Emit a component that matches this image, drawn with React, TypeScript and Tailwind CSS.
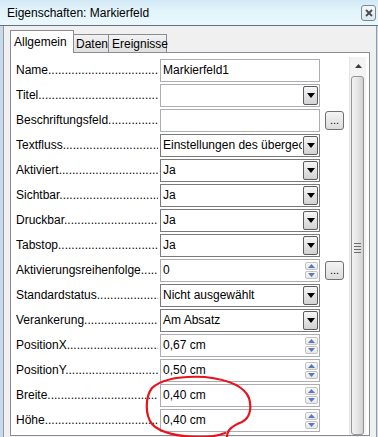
import React from 'react'

type Kind = 'text' | 'combo' | 'list' | 'spin'

type Row = { label: string; kind: Kind; value: string; more?: boolean }

const rows: Row[] = [
  { label: 'Name', kind: 'text', value: 'Markierfeld1' },
  { label: 'Titel', kind: 'combo', value: '' },
  { label: 'Beschriftungsfeld', kind: 'text', value: '', more: true },
  { label: 'Textfluss', kind: 'list', value: 'Einstellungen des übergeordneten Objekts' },
  { label: 'Aktiviert', kind: 'list', value: 'Ja' },
  { label: 'Sichtbar', kind: 'list', value: 'Ja' },
  { label: 'Druckbar', kind: 'list', value: 'Ja' },
  { label: 'Tabstop', kind: 'list', value: 'Ja' },
  { label: 'Aktivierungsreihenfolge', kind: 'spin', value: '0', more: true },
  { label: 'Standardstatus', kind: 'list', value: 'Nicht ausgewählt' },
  { label: 'Verankerung', kind: 'list', value: 'Am Absatz' },
  { label: 'PositionX', kind: 'spin', value: '0,67 cm' },
  { label: 'PositionY', kind: 'spin', value: '0,50 cm' },
  { label: 'Breite', kind: 'spin', value: '0,40 cm' },
  { label: 'Höhe', kind: 'spin', value: '0,40 cm' },
]

function DropButton() {
  return (
    <div className="m-px flex w-[15px] items-center justify-center rounded-[2px] border border-[#5c5c5c] bg-gradient-to-b from-[#f6f6f6] to-[#d2d2d2]">
      <svg width="8" height="5" viewBox="0 0 8 5">
        <path d="M0 0h8L4 5z" fill="#000" />
      </svg>
    </div>
  )
}

function SpinButtons() {
  return (
    <div className="flex w-[14px] flex-col gap-px py-[2px] pr-px">
      <div className="flex h-[9px] items-center justify-center rounded-[2px] border border-[#c2c2c2] bg-gradient-to-b from-[#fafafa] to-[#e6e6e6]">
        <svg width="7" height="4" viewBox="0 0 7 4">
          <path d="M3.5 0L7 4H0z" fill="#5a78bd" />
        </svg>
      </div>
      <div className="flex h-[9px] items-center justify-center rounded-[2px] border border-[#c2c2c2] bg-gradient-to-b from-[#fafafa] to-[#e6e6e6]">
        <svg width="7" height="4" viewBox="0 0 7 4">
          <path d="M0 0h7L3.5 4z" fill="#5a78bd" />
        </svg>
      </div>
    </div>
  )
}

function Field({ row }: { row: Row }) {
  const dark = row.kind === 'list'
  return (
    <div
      className={
        'flex h-[23px] w-[160px] bg-white ' +
        (dark ? 'border border-[#7a7a7a]' : 'border border-[#acadb3]')
      }
    >
      <div className="flex-1 overflow-hidden whitespace-nowrap pl-[2px] text-[12px] leading-[21px] text-black">
        {row.value}
      </div>
      {(row.kind === 'list' || row.kind === 'combo') && <DropButton />}
      {row.kind === 'spin' && <SpinButtons />}
    </div>
  )
}

export default function App() {
  return (
    <div className="relative flex h-[437px] w-[378px] flex-col overflow-hidden bg-[#f0f0f0] font-['Liberation_Sans',Arial,sans-serif] text-black">
      {/* title bar */}
      <div className="flex h-[26px] items-center justify-between border-b border-[#65727e] bg-[linear-gradient(180deg,#d2e9f5_0%,#e2f3fb_40%,#eaf8fd_100%)] pl-[7px] pr-[2px]">
        <span className="text-[12px] leading-none">Eigenschaften: Markierfeld</span>
        <div className="flex h-[16px] w-[15px] items-center justify-center rounded-[3px] border border-[#7b8895] bg-gradient-to-b from-[#f4f9fc] to-[#dbe8f0]">
          <svg width="8" height="8" viewBox="0 0 8 8">
            <path d="M1 1l6 6M7 1l-6 6" stroke="#4a4a4a" strokeWidth="1.8" />
          </svg>
        </div>
      </div>

      <div className="flex flex-1">
        <div className="w-[4px] border-r border-[#8e9baa] bg-[#c8dae8]" />
        <div className="flex flex-1 flex-col pl-[6px] pr-[6px] pt-[4px]">
          {/* tabs */}
          <div className="relative z-10 -mb-px flex items-end">
            <div className="flex h-[23px] w-[64px] items-center border border-b-0 border-[#898c95] bg-white pl-[3px] text-[12px]">
              Allgemein
            </div>
            <div className="flex h-[19px] w-[35px] items-center border border-l-0 border-[#898c95] bg-gradient-to-b from-[#f2f2f2] to-[#e0e0e0] pl-[2px] text-[12px]">
              Daten
            </div>
            <div className="flex h-[19px] w-[58px] items-center border border-l-0 border-[#898c95] bg-gradient-to-b from-[#f2f2f2] to-[#e0e0e0] pl-[3px] text-[12px]">
              Ereignisse
            </div>
          </div>

          {/* panel */}
          <div className="flex h-[384px] w-[360px] border border-[#898c95] bg-white">
            <div className="flex w-[338px] flex-col gap-[2px] pl-[5px] pt-[6px]">
              {rows.map((row) => (
                <div key={row.label} className="flex h-[23px] items-center">
                  <div className="mr-[2px] w-[142px] overflow-hidden whitespace-nowrap text-[12px] leading-[23px]">
                    {row.label}
                    {'.'.repeat(60)}
                  </div>
                  <Field row={row} />
                  {row.more && (
                    <div className="ml-[5px] flex h-[19px] w-[19px] items-end justify-center rounded-[3px] border border-[#707070] bg-gradient-to-b from-[#f4f4f4] to-[#dcdcdc] pb-[3px] text-[11px] leading-none">
                      ...
                    </div>
                  )}
                </div>
              ))}
            </div>

            {/* scrollbar */}
            <div className="mt-[4px] flex w-[17px] flex-col border-l border-[#e4e4e4] bg-[#f3f3f3]">
              <div className="flex h-[17px] items-center justify-center">
                <svg width="7" height="4" viewBox="0 0 7 4">
                  <path d="M3.5 0L7 4H0z" fill="#3c3c3c" />
                </svg>
              </div>
              <div className="ml-px mr-[2px] mt-[2px] flex flex-1 flex-col items-center justify-start rounded-[3px] border border-[#959595] bg-gradient-to-r from-[#f2f2f2] via-[#e6e6e6] to-[#d0d0d0] pt-[184px]">
                <div className="-mt-[18px] flex flex-col gap-[2px]">
                  <div className="h-px w-[7px] bg-[#6c6c6c]" />
                  <div className="h-px w-[7px] bg-[#6c6c6c]" />
                  <div className="h-px w-[7px] bg-[#6c6c6c]" />
                  <div className="h-px w-[7px] bg-[#6c6c6c]" />
                </div>
              </div>
            </div>
          </div>
        </div>
        <div className="w-[2px] border-l border-[#8e9baa] bg-[#c8dae8]" />
      </div>

      {/* red hand-drawn annotation */}
      <svg className="pointer-events-none absolute left-0 top-0" width="378" height="437" viewBox="0 0 378 437">
        <path
          d="M227 437 C227 430 232 426 242 422 C250 418 252 408 249 398 C245 388 232 380 205 377 C185 376 163 378 152 388 C145 397 145 415 152 424 C160 433 180 437 200 437 C212 437 220 435 225 433"
          fill="none"
          stroke="#e8141b"
          strokeWidth="2.2"
          strokeLinecap="round"
        />
      </svg>
    </div>
  )
}
